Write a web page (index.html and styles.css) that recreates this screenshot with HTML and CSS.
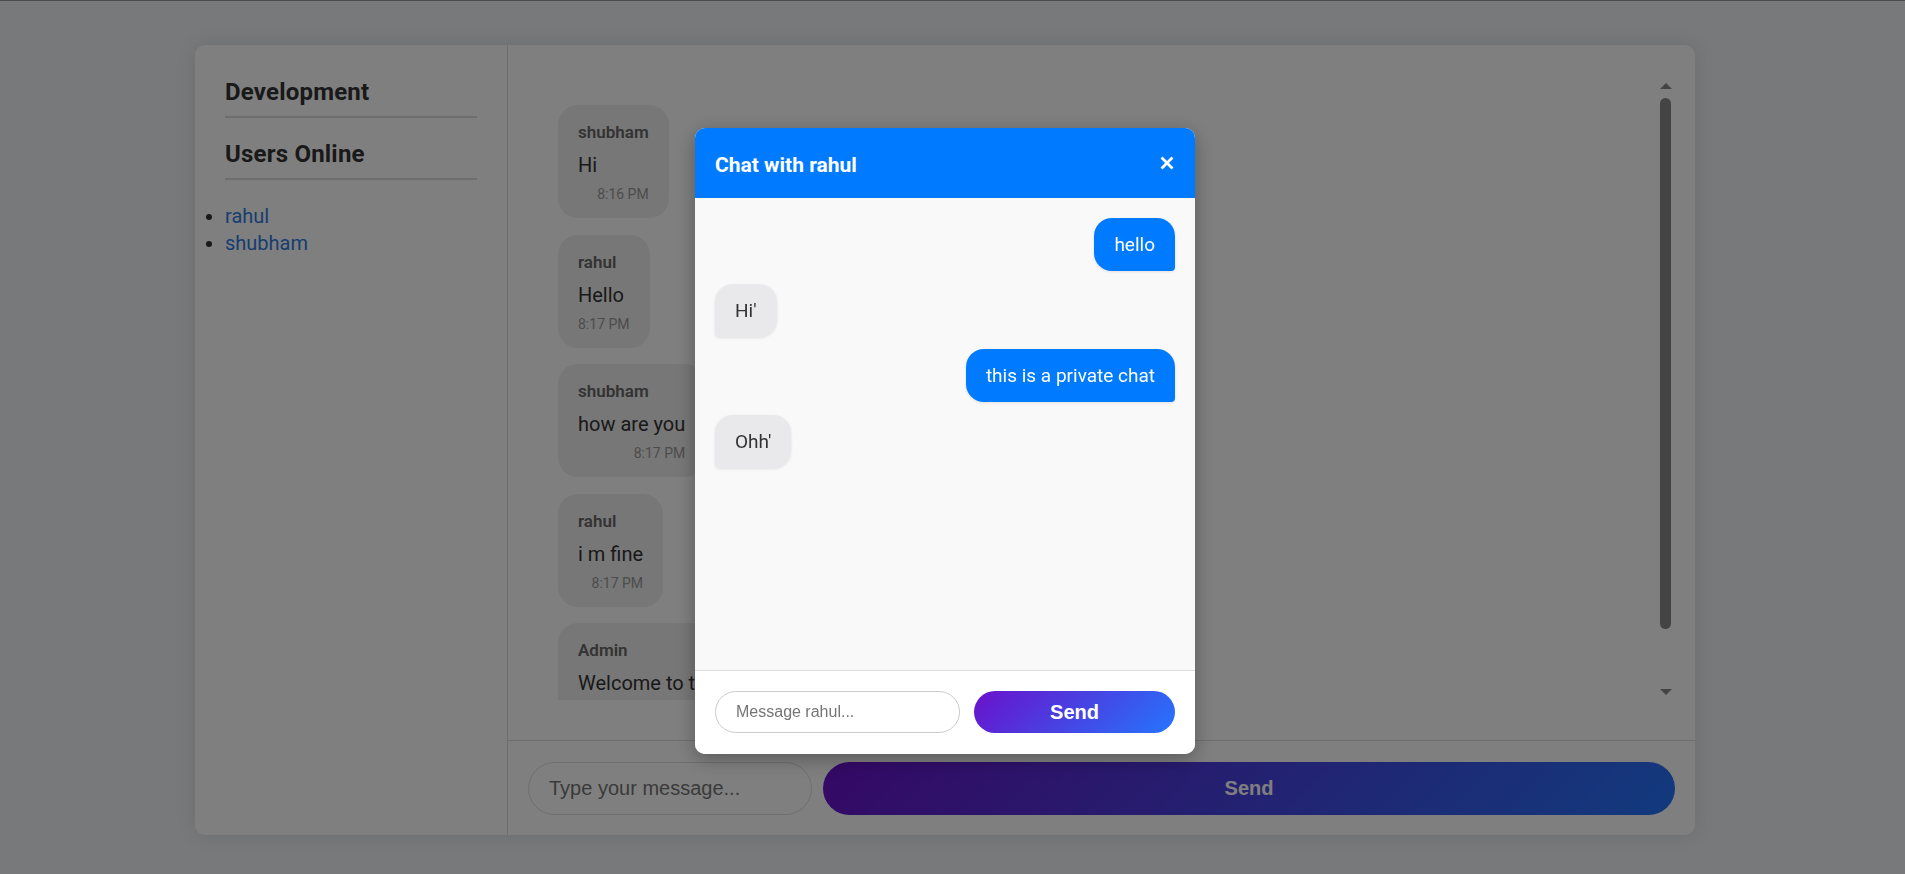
FILE: index.html
```html
<!DOCTYPE html>
<html lang="en">
<head>
<meta charset="utf-8">
<title>Chat</title>
<link rel="stylesheet" href="styles.css">
</head>
<body>
  <div class="app">
    <aside class="sidebar">
      <h3 class="side-title">Development</h3>
      <h3 class="side-title">Users Online</h3>
      <ul class="users">
        <li><a href="#" class="user-link">rahul</a></li>
        <li><a href="#" class="user-link">shubham</a></li>
      </ul>
    </aside>
    <main class="chat">
      <div class="thread">
        <div class="messages">
          <div class="msg">
            <div class="msg-user">shubham</div>
            <div class="msg-text">Hi</div>
            <div class="msg-time">8:16 PM</div>
          </div>
          <div class="msg">
            <div class="msg-user">rahul</div>
            <div class="msg-text">Hello</div>
            <div class="msg-time">8:17 PM</div>
          </div>
          <div class="msg">
            <div class="msg-user">shubham</div>
            <div class="msg-text">how are you</div>
            <div class="msg-time">8:17 PM</div>
          </div>
          <div class="msg">
            <div class="msg-user">rahul</div>
            <div class="msg-text">i m fine</div>
            <div class="msg-time">8:17 PM</div>
          </div>
          <div class="msg">
            <div class="msg-user">Admin</div>
            <div class="msg-text">Welcome to the chat, shubham!</div>
            <div class="msg-time">8:15 PM</div>
          </div>
        </div>
        <div class="scrollbar" aria-hidden="true">
          <span class="sb-btn"><span class="sb-arrow sb-up"></span></span>
          <span class="sb-track"><span class="sb-thumb"></span></span>
          <span class="sb-btn"><span class="sb-arrow sb-down"></span></span>
        </div>
      </div>
      <form class="composer">
        <input class="composer-input" type="text" placeholder="Type your message...">
        <button class="composer-send" type="button">Send</button>
      </form>
    </main>
  </div>

  <div class="overlay">
    <div class="modal">
      <div class="modal-header">
        <h3 class="modal-title">Chat with rahul</h3>
        <button class="modal-close" type="button" aria-label="Close">
          <svg width="14" height="14" viewBox="0 0 14 14"><path d="M1.5 1.5 L12.5 12.5 M12.5 1.5 L1.5 12.5" stroke="#fff" stroke-width="2.8" fill="none"/></svg>
        </button>
      </div>
      <div class="modal-body">
        <div class="pm pm-sent">hello</div>
        <div class="pm pm-recv">Hi'</div>
        <div class="pm pm-sent">this is a private chat</div>
        <div class="pm pm-recv">Ohh'</div>
      </div>
      <div class="modal-footer">
        <input class="pm-input" type="text" placeholder="Message rahul...">
        <button class="pm-send" type="button">Send</button>
      </div>
    </div>
  </div>
</body>
</html>
```
FILE: styles.css
```css
* { box-sizing: border-box; }

html, body { height: 100%; }

body {
  margin: 0;
  border-top: 1px solid #999;
  background: #f0f2f5;
  font-family: Roboto, "Noto Sans", sans-serif;
  color: #333;
  overflow: hidden;
}

.app {
  width: 1500px;
  height: 790px;
  margin: 44px 0 0 195px;
  display: flex;
  background: #fff;
  border-radius: 10px;
  box-shadow: 0 0 20px rgba(0, 0, 0, 0.1);
  overflow: hidden;
}

/* Sidebar */
.sidebar {
  flex: 0 0 313px;
  border-right: 1px solid #ddd;
  padding: 31px 30px;
}

.side-title {
  margin: 0 0 20px;
  font-size: 24px;
  line-height: 32px;
  font-weight: 700;
  letter-spacing: 0.2px;
  color: #333;
  padding-bottom: 8px;
  border-bottom: 2px solid #ddd;
}

.users {
  margin: 23px 0 0;
  padding: 0;
  list-style: disc;
  font-size: 20px;
  line-height: 27px;
}

.user-link {
  color: #2f7be0;
  text-decoration: none;
}

/* Chat */
.chat {
  flex: 1;
  display: flex;
  flex-direction: column;
  min-width: 0;
}

.thread {
  flex: 1;
  min-height: 0;
  margin: 33px 22px 40px 20px;
  display: flex;
}

.messages {
  flex: 1;
  min-width: 0;
  padding: 27px 0 0 30px;
  overflow: hidden;
  display: flex;
  flex-direction: column;
  align-items: flex-start;
  gap: 16.5px;
}

.scrollbar {
  flex: 0 0 15px;
  display: flex;
  flex-direction: column;
}

.sb-btn {
  flex: none;
  height: 17px;
  display: flex;
  justify-content: center;
}

.sb-arrow {
  width: 0;
  height: 0;
  border-left: 6px solid transparent;
  border-right: 6px solid transparent;
}

.sb-up {
  margin-top: 5px;
  border-bottom: 6px solid #888;
}

.sb-down {
  margin-top: 6px;
  border-top: 6px solid #888;
}

.sb-track {
  flex: 1;
  padding: 3px 2px;
  display: flex;
  flex-direction: column;
}

.sb-thumb {
  height: 531px;
  background: #888;
  border-radius: 6px;
}

.msg {
  flex: none;
  background: #eeeeee;
  border-radius: 20px;
  padding: 16px 20px 14px;
  max-width: 70%;
}

.msg-user {
  font-size: 17px;
  line-height: 23px;
  font-weight: 600;
  color: #666;
  margin-bottom: 7px;
}

.msg-text {
  font-size: 20px;
  line-height: 27px;
  color: #333;
  margin-bottom: 7px;
  padding-top: 1px;
}

.msg-time {
  font-size: 14px;
  line-height: 19px;
  color: #999;
  text-align: right;
  margin-top: -1px;
}

.composer {
  margin: 0;
  border-top: 1px solid #ddd;
  padding: 21px 20px 20px;
  display: flex;
  gap: 11px;
}

.composer-input {
  flex: 0 0 284px;
  min-width: 0;
  height: 53px;
  border: 1px solid #ddd;
  border-radius: 27px;
  padding: 0 20px;
  font-family: "Liberation Sans", Arial, sans-serif;
  font-size: 20px;
  background: #fff;
  outline: none;
}

.composer-send {
  flex: 1;
  min-width: 0;
  height: 53px;
  border: none;
  border-radius: 27px;
  background: linear-gradient(135deg, #6a11cb, #2575fc);
  color: #fff;
  font-family: "Liberation Sans", Arial, sans-serif;
  font-size: 20px;
  font-weight: 700;
}

/* Modal */
.overlay {
  position: fixed;
  inset: 0;
  background: rgba(0, 0, 0, 0.5);
  display: flex;
  align-items: center;
  justify-content: center;
  padding: 8px 15px 0 0;
}

.modal {
  width: 500px;
  height: 626px;
  background: #fff;
  border-radius: 10px;
  overflow: hidden;
  display: flex;
  flex-direction: column;
  box-shadow: 0 5px 20px rgba(0, 0, 0, 0.3);
}

.modal-header {
  flex: none;
  height: 70px;
  background: #007bff;
  color: #fff;
  display: flex;
  align-items: center;
  justify-content: space-between;
  padding: 0 21px 0 20px;
}

.modal-title {
  margin: 0;
  font-size: 21px;
  line-height: 26px;
  font-weight: 700;
  padding-top: 3px;
}

.modal-close {
  border: none;
  background: none;
  padding: 0;
  width: 14px;
  height: 14px;
  display: flex;
}

.modal-body {
  flex: 1;
  min-height: 0;
  background: #f9f9f9;
  padding: 20px;
  display: flex;
  flex-direction: column;
  align-items: flex-start;
  gap: 12.5px;
  overflow-y: auto;
}

.pm {
  flex: none;
  font-size: 19px;
  line-height: 25px;
  padding: 14px 20px;
  box-shadow: 0 1px 3px rgba(0, 0, 0, 0.1);
  max-width: 80%;
}

.pm-sent {
  align-self: flex-end;
  background: #007bff;
  color: #fff;
  border-radius: 18px 18px 4px 18px;
}

.pm-recv {
  background: #e9e9eb;
  color: #333;
  border-radius: 18px 18px 18px 4px;
}

.modal-footer {
  flex: none;
  border-top: 1px solid #ddd;
  background: #fff;
  padding: 20px 20px 21px;
  display: flex;
  gap: 14px;
}

.pm-input {
  flex: 1;
  min-width: 0;
  height: 42px;
  border: 1px solid #ccc;
  border-radius: 21px;
  padding: 0 20px;
  font-family: "Liberation Sans", Arial, sans-serif;
  font-size: 16px;
  outline: none;
}

.pm-send {
  flex: 0 0 201px;
  height: 42px;
  border: none;
  border-radius: 21px;
  background: linear-gradient(135deg, #6a11cb, #2575fc);
  color: #fff;
  font-family: "Liberation Sans", Arial, sans-serif;
  font-size: 20px;
  font-weight: 700;
}
```
